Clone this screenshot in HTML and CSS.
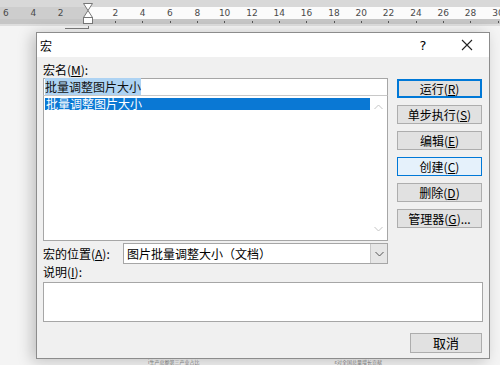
FILE: index.html
```html
<!DOCTYPE html>
<html lang="zh-CN">
<head>
<meta charset="utf-8">
<title>宏</title>
<link rel="stylesheet" href="styles.css">
</head>
<body>
<div class="ruler">
  <div class="ruler-row">
    <span class="cell">6</span><span class="cell">4</span><span class="cell">2</span>
    <span class="cell marker">
      <svg width="10" height="22" viewBox="0 0 10 22"><path d="M0.5 0.5H9.5L5 7.5Z" fill="#fff" stroke="#777"/><path d="M5 7.5L9.5 14.5H0.5Z" fill="#fff" stroke="#777"/><rect x="0.5" y="14.5" width="9" height="6" fill="#fff" stroke="#777"/></svg>
    </span>
    <span class="cell tick">2</span><span class="cell tick">4</span><span class="cell tick">6</span><span class="cell tick">8</span><span class="cell tick">10</span><span class="cell tick">12</span><span class="cell tick">14</span><span class="cell tick">16</span><span class="cell tick">18</span><span class="cell tick">20</span><span class="cell tick">22</span><span class="cell tick">24</span><span class="cell tick">26</span><span class="cell tick">28</span><span class="cell tick">30</span>
  </div>
</div>
<div class="stage">
  <div class="stem"></div>
  <div class="dialog">
    <div class="titlebar">
      <span class="title">宏</span>
      <div class="title-btns">
        <span class="help">?</span>
        <span class="close"><svg width="12" height="12" viewBox="0 0 12 12"><path d="M1 1L11 11M11 1L1 11" stroke="#222" stroke-width="1.1"/></svg></span>
      </div>
    </div>
    <div class="body">
      <div class="main">
        <div class="left">
          <div class="label">宏名(<u>M</u>):</div>
          <div class="input"><span class="sel">批量调整图片大小</span></div>
          <div class="list">
            <div class="items"><div class="item selected">批量调整图片大小</div></div>
            <div class="scroll">
              <svg width="9" height="6" viewBox="0 0 9 6"><path d="M0.5 5L4.5 1L8.5 5" fill="none" stroke="#c4c4c4"/></svg>
              <svg width="9" height="6" viewBox="0 0 9 6"><path d="M0.5 1L4.5 5L8.5 1" fill="none" stroke="#c4c4c4"/></svg>
            </div>
          </div>
          <div class="loc-row">
            <span class="loc-label">宏的位置(<u>A</u>):</span>
            <div class="combo">
              <span class="combo-text">图片批量调整大小（文档）</span>
              <span class="combo-btn"><svg width="9" height="6" viewBox="0 0 9 6"><path d="M0.5 1L4.5 5L8.5 1" fill="none" stroke="#555"/></svg></span>
            </div>
          </div>
          <div class="label">说明(<u>I</u>):</div>
        </div>
        <div class="right">
          <div class="btn default">运行(<u>R</u>)</div>
          <div class="btn">单步执行(<u>S</u>)</div>
          <div class="btn">编辑(<u>E</u>)</div>
          <div class="btn hover">创建(<u>C</u>)</div>
          <div class="btn">删除(<u>D</u>)</div>
          <div class="btn">管理器(<u>G</u>)...</div>
        </div>
      </div>
      <div class="desc"></div>
      <div class="footer"><div class="btn cancel">取消</div></div>
    </div>
  </div>
  <div class="doc-text">
    <span class="t1">i生产总额第三产业占比</span>
    <span class="t2">ε对全国总量增长贡献</span>
  </div>
</div>
</body>
</html>
```
FILE: styles.css
```css
* { box-sizing: border-box; }
html, body { margin: 0; padding: 0; }
body {
  width: 500px;
  height: 365px;
  overflow: hidden;
  background: #f4f4f4;
  font-family: "Noto Sans CJK SC", "Noto Sans", sans-serif;
  font-size: 12px;
  color: #000;
}
u { text-decoration: underline; text-underline-offset: 1px; }

.ruler {
  height: 26px;
  background:
    linear-gradient(to bottom, #d8d8d8 0 7px, transparent 7px 19px, #c6c6c6 19px 24px, #dedede 24px 26px),
    linear-gradient(to right, #cdcdcd 0 88px, #fbfbfb 88px);
  overflow: hidden;
}
.ruler-row {
  display: flex;
  margin-left: -7.7px;
  height: 26px;
}
.cell {
  flex: 0 0 27.33px;
  position: relative;
  text-align: center;
  font-family: "DejaVu Sans", sans-serif;
  font-size: 9px;
  line-height: 10px;
  padding-top: 8px;
  color: #4a4a4a;
}
.cell.tick::after {
  content: "";
  position: absolute;
  left: 13.5px;
  top: 21px;
  width: 1px;
  height: 2px;
  background: #555;
}
.cell.marker { padding-top: 3px; }
.cell.marker svg { display: block; margin: 0 auto; }

.stage { position: relative; height: 339px; padding-top: 6px; }
.stem {
  position: absolute;
  left: 65px;
  top: 0;
  width: 24px;
  height: 3px;
  border-right: 1px solid #777;
  border-bottom: 1px solid #777;
}
.dialog {
  margin-left: 36px;
  width: 454px;
  height: 327px;
  border: 1px solid #8c8c8c;
  background: #f0f0f0;
  box-shadow: -4px 2px 14px rgba(0,0,0,0.22);
  display: flex;
  flex-direction: column;
}
.titlebar {
  height: 24px;
  background: #fff;
  display: flex;
  align-items: center;
  justify-content: space-between;
  padding-left: 3px;
  padding-right: 12px;
}
.title { font-size: 12px; }
.title-btns { display: flex; align-items: center; gap: 24px; }
.help { width: 20px; text-align: center; font-family: "DejaVu Sans", sans-serif; font-size: 13px; }
.close { width: 20px; display: flex; justify-content: center; }

.body { padding: 5px 6px 0 6px; flex: 1; }
.main { display: flex; gap: 9px; }
.left { width: 345px; display: flex; flex-direction: column; }
.label { height: 16px; line-height: 16px; }
.input {
  height: 18px;
  border: 1px solid #a6a6a6;
  background: #fff;
  padding-left: 1px;
  line-height: 16px;
}
.sel { background: #aed3f3; color: #111; }
.list {
  margin-top: -1px;
  height: 146px;
  border: 1px solid #a6a6a6;
  border-top-color: #c8c8c8;
  background: #fff;
  display: flex;
}
.items { flex: 1; padding: 2px 0 0 1px; }
.item { height: 12px; line-height: 12px; padding-left: 1px; }
.item.selected { background: #0a78d4; color: #fff; }
.scroll {
  width: 17px;
  display: flex;
  flex-direction: column;
  justify-content: space-between;
  align-items: center;
  padding: 8px 0 8px;
}
.loc-row { margin-top: 2px; display: flex; align-items: center; height: 21px; }
.loc-label { width: 80px; }
.combo {
  flex: 1;
  height: 21px;
  border: 1px solid #a6a6a6;
  background: #fff;
  display: flex;
  align-items: center;
}
.combo-text { flex: 1; padding-left: 3px; }
.combo-btn {
  width: 17px;
  height: 19px;
  background: #e6e6e6;
  border-left: 1px solid #c8c8c8;
  display: flex;
  align-items: center;
  justify-content: center;
}
.right { width: 85px; padding-top: 17px; display: flex; flex-direction: column; gap: 7px; }
.btn {
  height: 19px;
  background: #e1e1e1;
  border: 1px solid #adadad;
  text-align: center;
  line-height: 17px;
}
.btn.default { border-color: #0078d7; box-shadow: inset 0 0 0 1px #0078d7; line-height: 17px; }
.btn.hover { background: #e5f1fb; border-color: #0078d7; }
.desc {
  margin-top: 2px;
  height: 40px;
  border: 1px solid #a6a6a6;
  background: #fff;
}
.footer { margin-top: 11px; display: flex; justify-content: flex-end; }
.btn.cancel { width: 72px; height: 20px; line-height: 18px; font-size: 13px; margin-right: 1px; }

.doc-text { display: flex; font-size: 5px; color: #777; line-height: 6px; }
.t1 { margin-left: 148px; }
.t2 { margin-left: 135px; }
```
